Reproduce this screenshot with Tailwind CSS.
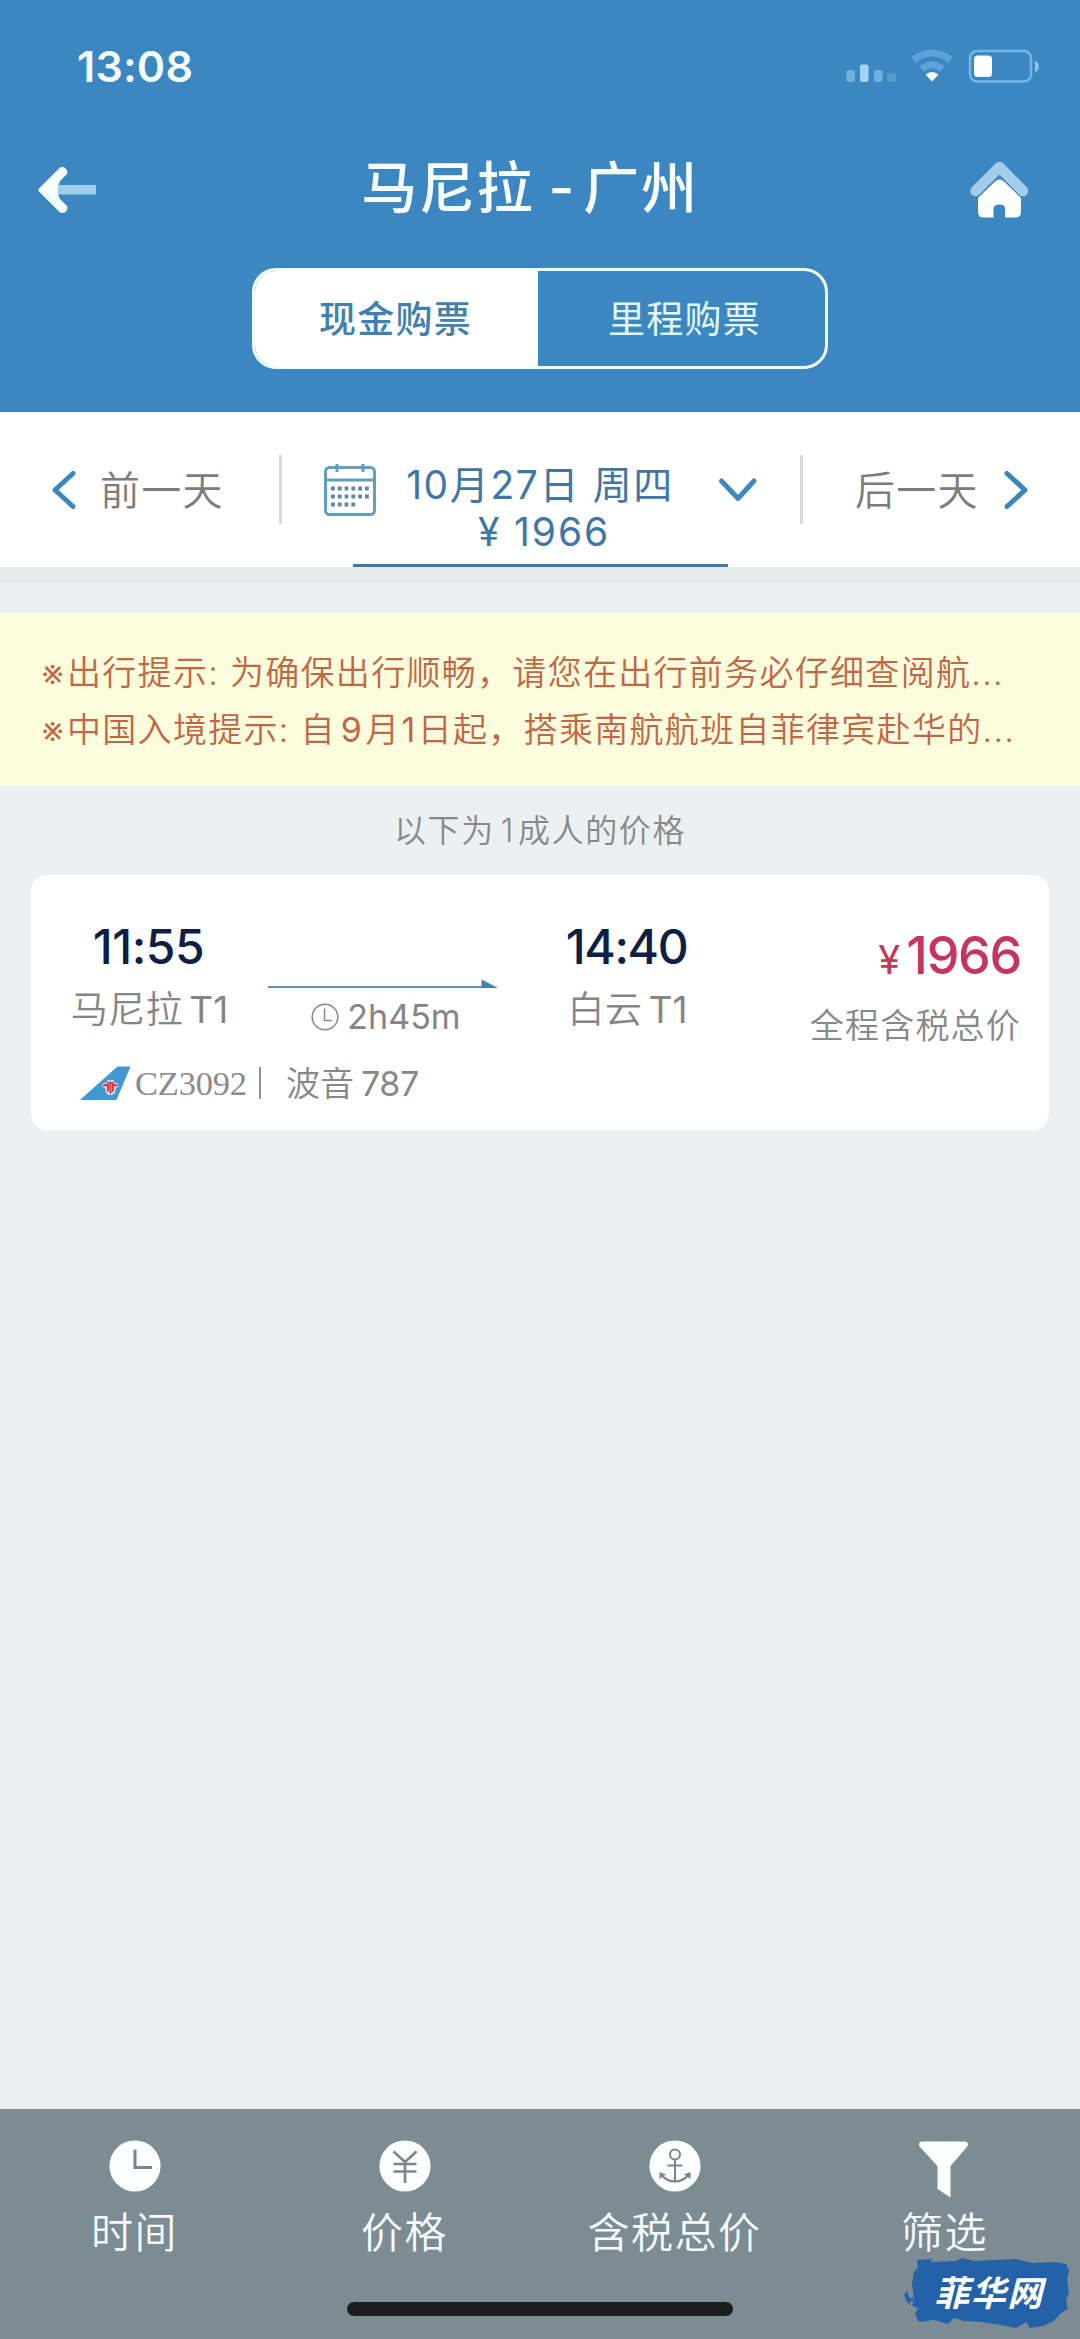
<!DOCTYPE html>
<html lang="zh-CN">
<head>
<meta charset="utf-8">
<title>马尼拉 - 广州</title>
<script src="https://cdn.jsdelivr.net/npm/@tailwindcss/browser@4"></script>
</head>
<body class="flex h-[2339px] w-[1080px] flex-col overflow-hidden bg-[#ecf0f1] font-['Inter','Noto_Sans_CJK_SC',sans-serif] leading-none whitespace-nowrap">

<header class="flex h-[412px] flex-col bg-[#3c87c1] text-white">
  <!-- status bar -->
  <div class="flex h-[132px] items-center justify-between pl-[77px] pr-[40px]">
    <span class="text-[43px] font-semibold tracking-[0.200px] text-[#f4fdff]">13:08</span>
    <svg class="h-[34px] w-[194px]" viewBox="846 49 194 34">
      <rect x="846.500" y="70" width="8.500" height="12" rx="2" fill="#6ab4dd"/>
      <rect x="860" y="64.500" width="8.500" height="17.500" rx="2" fill="#a3d5f2"/>
      <rect x="874" y="70" width="8.500" height="12" rx="2" fill="#6cb0e0"/>
      <rect x="887" y="73" width="9" height="9" rx="2" fill="#559bd0"/>
      <path d="M913.500 60Q932 46 950.500 60" fill="none" stroke="#5ba3d8" stroke-width="7"/>
      <path d="M921.500 69Q932 60.500 942.500 69" fill="none" stroke="#5ba3d8" stroke-width="7"/>
      <path d="M932 81.500L925.500 74.500Q932 69.500 938.500 74.500Z" fill="#fff"/>
      <rect x="970" y="51" width="61" height="30.500" rx="7" fill="none" stroke="#70b6e8" stroke-width="2.500"/>
      <rect x="974" y="55.500" width="18" height="21.500" rx="3.500" fill="#fff"/>
      <path d="M1035 60.500Q1039 63 1039 66.500T1035 72.500Z" fill="#8cc6ee"/>
    </svg>
  </div>
  <!-- title bar -->
  <div class="flex h-[116px] items-center justify-between pl-[38px] pr-[51px]">
    <svg class="h-[50px] w-[60px]" viewBox="38 165 60 50">
      <rect x="55" y="185" width="41" height="9.500" fill="#9fcdec"/>
      <path d="M39 188.500L59.500 168Q62 166 65 168Q68.500 171 67 174L60 181Q55.500 190 60 199L67 206Q68.500 209 65.500 212Q62 214 59.500 212L39 191.500Q37.500 190 39 188.500Z" fill="#f5feff"/>
    </svg>
    <h1 class="flex items-center pr-[7px] pb-[4px] text-[56px] font-medium tracking-[1.700px] text-[#f7feff]"><span>马尼拉</span><span class="ml-[14px] mr-[9px] tracking-normal">-</span><span>广州</span></h1>
    <svg class="h-[60px] w-[60px]" viewBox="969 160 60 60">
      <path d="M975.500 191L999.500 167L1023 191" fill="none" stroke="#a3cdeb" stroke-width="10.500" stroke-linejoin="round" stroke-linecap="round"/>
      <path d="M978 198L995 181.500Q999.500 177.500 1004 181.500L1021 198V212Q1021 217.500 1015.500 217.500H1005V208Q1005 204.500 999.500 204.500T993.500 208V217.500H983.500Q978 217.500 978 212Z" fill="#fff"/>
    </svg>
  </div>
  <!-- purchase type -->
  <div class="mt-[20px] ml-[252px] flex h-[101px] w-[576px] overflow-hidden rounded-[24px] border-3 border-[#f2fdff]">
    <div class="flex w-[283px] items-center justify-center bg-white pt-[1px] pr-[2px] text-[37px] font-medium tracking-[1.300px] text-[#437fae]">现金购票</div>
    <div class="flex flex-1 items-center justify-center pt-[1px] pl-[6px] text-[37px] tracking-[1.300px] text-[#e2f7ff]">里程购票</div>
  </div>
</header>

<!-- date switcher -->
<nav class="flex h-[155px] bg-white">
  <div class="flex w-[279px] items-center pl-[51px]">
    <svg class="h-[42px] w-[26px]" viewBox="0 0 26 42"><path d="M22 4.500L4 21L22 37.500" fill="none" stroke="#3c87c1" stroke-width="5" stroke-linecap="round" stroke-linejoin="round"/></svg>
    <span class="ml-[23px] pt-[2px] text-[40px] font-[350] tracking-[1.200px] text-[#7c7c7c]">前一天</span>
  </div>
  <div class="mt-[43px] h-[69px] w-[3px] bg-[#d8dadc]"></div>
  <div class="flex flex-1">
    <svg class="mt-[51px] ml-[42px] h-[54px] w-[52px]" viewBox="0 0 52 54" fill="none" stroke="#619fc0" stroke-width="3">
      <rect x="1.500" y="4.500" width="49" height="47" rx="4"/>
      <path d="M1.500 17H50.500M13 1V9M39 1V9"/>
      <path d="M7 25.500H46M7 33.500H46M7 41.500H32" stroke="#5e8797" stroke-width="4" stroke-dasharray="3.800 3"/>
    </svg>
    <div class="relative flex w-[326px] flex-col items-center pt-[53px] text-[#3f76a6]">
      <span class="pl-[2px] text-[39px] tracking-[1.600px]">10月27日 周四</span>
      <span class="mt-[8px] pl-[10px] text-[39px] tracking-[1.900px]">¥ 1966</span>
      <div class="absolute -left-[23px] bottom-0 h-[3px] w-[375px] bg-[#3d79a8]"></div>
    </div>
    <svg class="mt-[64px] ml-[15px] h-[28px] w-[42px]" viewBox="0 0 42 28"><path d="M4.500 5L21 22.500L37 5" fill="none" stroke="#3f88bd" stroke-width="5" stroke-linecap="round" stroke-linejoin="round"/></svg>
  </div>
  <div class="mt-[43px] h-[69px] w-[3px] bg-[#d8dadc]"></div>
  <div class="flex w-[277px] items-center pl-[52px]">
    <span class="pt-[2px] text-[40px] font-[350] tracking-[1.200px] text-[#7c7c7c]">后一天</span>
    <svg class="ml-[24px] h-[42px] w-[26px]" viewBox="0 0 26 42"><path d="M4 4.500L22 21L4 37.500" fill="none" stroke="#3c87b9" stroke-width="5" stroke-linecap="round" stroke-linejoin="round"/></svg>
  </div>
</nav>
<div class="h-[16px] bg-[#e6eaea]"></div>

<!-- notices -->
<section class="mt-[30px] flex h-[173px] flex-col bg-[#fbfddc] pt-[43px] pl-[38px] text-[34px] font-[350] text-[#c26746]">
  <p class="flex items-center tracking-[1.300px]"><span class="flex w-[29px] justify-center text-[38px] leading-[34px] tracking-normal">※</span><span>出行提示: 为确保出行顺畅，请您在出行前务必仔细查阅航...</span></p>
  <p class="mt-[23px] flex items-center tracking-[1.300px]"><span class="flex w-[29px] justify-center text-[38px] leading-[34px] tracking-normal">※</span><span>中国入境提示: 自<span class="ml-[5px] mr-[2px] font-normal">9</span>月<span class="mx-[1px] font-normal">1</span>日起，搭乘南航航班自菲律宾赴华的...</span></p>
</section>

<main class="flex flex-1 flex-col">
  <p class="flex h-[89px] items-center justify-center text-[32px] font-[350] tracking-[1.600px] text-[#85898b]"><span>以下为<span class="ml-[6px] mr-[3px]">1</span>成人的价格</span></p>
  <!-- flight -->
  <article class="mx-[31px] flex h-[255px] justify-between rounded-[16px] bg-white pr-[28px]">
    <div class="flex flex-col pl-[40px]">
      <div class="flex">
        <div class="flex w-[157px] flex-col items-center pt-[48px]">
          <span class="pr-[2px] text-[48px] font-medium tracking-[-0.400px] text-[#0e1f45]">11:55</span>
          <span class="mt-[20px] text-[37px] font-[350] tracking-[0.500px] text-[#858585]">马尼拉<span class="ml-[6px] font-normal tracking-normal">T1</span></span>
        </div>
        <div class="flex w-[230px] flex-col items-center pt-[104px] ml-[40px]">
          <svg class="h-[10px] w-[230px]" viewBox="0 0 230 10"><path d="M0 8H214" stroke="#6390b5" stroke-width="1.800"/><path d="M213.500 0.500L230 9H213.500Z" fill="#3f83b3"/></svg>
          <div class="mt-[11px] flex items-center gap-[8px] pl-[6px]">
            <svg class="h-[28px] w-[28px]" viewBox="0 0 28 28" fill="none" stroke="#8b8585" stroke-width="1.500"><circle cx="14" cy="14" r="12.800"/><path d="M13.500 5.500V17.500H21"/></svg>
            <span class="text-[34px] text-[#868484]">2h45m</span>
          </div>
        </div>
        <div class="ml-[68px] flex w-[124px] flex-col items-center pt-[48px]">
          <span class="pr-[3px] text-[48px] font-medium tracking-[-1.400px] text-[#0e1f45]">14:40</span>
          <span class="mt-[20px] pr-[1px] text-[37px] font-[350] tracking-[0.500px] text-[#858585]">白云<span class="ml-[6px] font-normal tracking-normal">T1</span></span>
        </div>
      </div>
      <div class="mt-[30px] ml-[9px] flex items-center">
        <svg class="h-[34px] w-[51px]" viewBox="0 0 51 34">
          <path d="M0 34L37.500 0.500H50.500L36.500 34Z" fill="#4198d4"/>
          <path d="M22 21Q22 16 26.500 17L27.500 14H33.500L34.500 17Q38.500 16 38.500 21L36 22L35 27L32 29H28.500L26 27L25 22Z" fill="#e6d5e4"/>
          <path d="M23.500 20.500Q24 18 28 19.500L28.500 16M37 20.500Q36.500 18 33 19.500L32.500 16M30.500 15.500V27.500M28 19.500V25.500M33 19.500V25.500" fill="none" stroke="#cf3848" stroke-width="1.900"/>
        </svg>
        <span class="ml-[4px] pt-[2px] font-['Liberation_Serif',serif] text-[34.500px] tracking-[-0.200px] text-[#8b8b8b]">CZ3092</span>
        <div class="ml-[12px] h-[32px] w-[2px] bg-[#929292]"></div>
        <span class="ml-[25px] pt-[3px] text-[34px] font-[350] text-[#868888]">波音<span class="ml-[7px] font-normal tracking-[-0.300px]">787</span></span>
      </div>
    </div>
    <div class="flex flex-col items-end pt-[55px]">
      <div class="flex items-baseline text-[#c5355c]"><span class="text-[40px]">¥</span><span class="ml-[6px] text-[52px] font-medium tracking-[-1.300px]">1966</span></div>
      <span class="mt-[27px] text-[34px] font-[350] tracking-[1.200px] text-[#85888a]">全程含税总价</span>
    </div>
  </article>
</main>

<!-- sort and filter bar -->
<footer class="relative grid h-[230px] grid-cols-4 bg-[#7d8b93] text-[42px] font-[350] tracking-[1.500px] text-[#f4fcff]">
  <div class="flex flex-col items-center pt-[31px]">
    <svg class="h-[52px] w-[52px]" viewBox="0 0 52 52"><circle cx="26" cy="26" r="25.600" fill="#fbffff"/><path d="M26 9.500V27.500H43" fill="none" stroke="#808487" stroke-width="3"/></svg>
    <span class="mt-[20px] pr-[1px]">时间</span>
  </div>
  <div class="flex flex-col items-center pt-[31px]">
    <svg class="h-[52px] w-[52px]" viewBox="0 0 52 52"><circle cx="26" cy="26" r="25.600" fill="#fbffff"/><path d="M14.500 11.500L26 22L37.500 11.500M26 22V43M14.500 24H37.500M14.500 31.500H37.500" fill="none" stroke="#808487" stroke-width="2.600"/></svg>
    <span class="mt-[20px] pr-[1px]">价格</span>
  </div>
  <div class="flex flex-col items-center pt-[31px]">
    <svg class="h-[52px] w-[52px]" viewBox="0 0 52 52"><circle cx="26" cy="26" r="25.600" fill="#fbffff"/><g fill="none" stroke="#808487" stroke-width="2"><circle cx="26" cy="14.500" r="5"/><path d="M26 19.500V41.500M18.500 25.500H33.500M12.500 35Q18 41.500 26 41.500T39.500 35"/></g><path d="M10.500 39V32L17 34.500ZM41.500 39V32L35 34.500Z" fill="#808487"/></svg>
    <span class="mt-[20px] pr-[1px]">含税总价</span>
  </div>
  <div class="flex flex-col items-center pt-[31px]">
    <svg class="mr-[3px] h-[59px] w-[52px]" viewBox="0 0 52 59"><path d="M4.500 1.500H46.500Q50 1.500 50 4.500Q50 6 48.500 7.500L32.500 26V57.500L19.500 49V26L2.500 7.500Q1 6 1 4.500Q1 1.500 4.500 1.500Z" fill="#fbffff"/></svg>
    <span class="mt-[13px] pr-[1px]">筛选</span>
  </div>
  <div class="absolute bottom-[23px] left-[347px] h-[14px] w-[386px] rounded-full bg-[#1b1e1f]"></div>
  <!-- site badge -->
  <div class="absolute right-[10px] bottom-[10px] flex h-[72px] w-[166px] items-center justify-center">
    <svg class="absolute inset-0 h-full w-full" viewBox="0 0 166 72" fill="#2361a9"><path d="M13 3L28 2L27 5L52 4L58 1L70 4L90 3L112 2L128 6L150 5L162 7L165 14L163 23L165 36L162 43L164 52L157 56L150 64L139 69L126 71L122 65L112 71L96 68L78 65L60 64L50 61L44 67L30 63L15 65L11 57L14 51L8 49L10 42L8 27L10 15L14 10Z"/><path d="M0 38L3 34L6 42L9 40V45L5 44L7 49L3 45Z"/></svg>
    <span class="relative top-[0px] left-[2px] text-[35px] font-bold italic tracking-[1.500px] text-white">菲华网</span>
  </div>
</footer>
</body>
</html>
